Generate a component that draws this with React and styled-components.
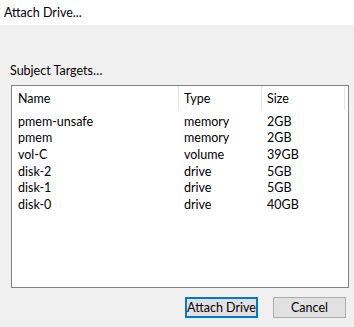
import React from 'react';
import styled, { createGlobalStyle } from 'styled-components';

const GlobalStyle = createGlobalStyle`
  html, body {
    margin: 0;
    padding: 0;
    background: #f0f0f0;
  }
  body {
    font-family: Lato, 'Noto Sans', sans-serif;
    font-size: 12.5px;
    color: #000;
  }
`;

const Dialog = styled.div`
  width: 354px;
  height: 327px;
  display: flex;
  flex-direction: column;
  background: #f0f0f0;
`;

const TitleBar = styled.div`
  height: 25px;
  background: #fff;
  display: flex;
  align-items: center;
  padding-left: 4px;
`;

const Body = styled.div`
  flex: 1;
  display: flex;
  flex-direction: column;
  padding: 38px 5px 0 11px;
`;

const Label = styled.div`
  height: 22px;
  margin-left: -1px;
  line-height: 16px;
`;

const ListBox = styled.div`
  height: 201px;
  border: 1px solid #828282;
  background: #fff;
  display: flex;
  flex-direction: column;
`;

const columns = '167px 83px 83px 1fr';

const HeaderRow = styled.div`
  display: grid;
  grid-template-columns: ${columns};
  height: 24px;
  margin-bottom: 3px;
`;

const HeaderCell = styled.div`
  display: flex;
  align-items: center;
  padding-left: ${(p) => (p.$first ? '6px' : '5px')};
  border-right: ${(p) => (p.$last ? 'none' : '1px solid #e5e5e5')};
`;

const Row = styled.div`
  display: grid;
  grid-template-columns: ${columns};
  height: 16.67px;
  align-items: center;
`;

const Cell = styled.div`
  padding-left: ${(p) => (p.$first ? '6px' : '5px')};
  white-space: nowrap;
`;

const ButtonRow = styled.div`
  display: flex;
  justify-content: flex-end;
  gap: 15px;
  padding: 9px 3px 0 0;
`;

const Button = styled.button`
  width: 73px;
  height: 21px;
  box-sizing: border-box;
  background: #e1e1e1;
  border: ${(p) => (p.$default ? '2px solid #0078d7' : '1px solid #adadad')};
  font-family: inherit;
  font-size: 12.5px;
  color: #000;
  padding: 0;
  white-space: nowrap;
  display: flex;
  align-items: center;
  justify-content: center;
`;

const targets = [
  { name: 'pmem-unsafe', type: 'memory', size: '2GB' },
  { name: 'pmem', type: 'memory', size: '2GB' },
  { name: 'vol-C', type: 'volume', size: '39GB' },
  { name: 'disk-2', type: 'drive', size: '5GB' },
  { name: 'disk-1', type: 'drive', size: '5GB' },
  { name: 'disk-0', type: 'drive', size: '40GB' },
];

export default function App() {
  return (
    <>
      <GlobalStyle />
      <Dialog>
        <TitleBar>Attach Drive...</TitleBar>
        <Body>
          <Label>Subject Targets…</Label>
          <ListBox>
            <HeaderRow>
              <HeaderCell $first>Name</HeaderCell>
              <HeaderCell>Type</HeaderCell>
              <HeaderCell>Size</HeaderCell>
              <HeaderCell $last />
            </HeaderRow>
            {targets.map((t) => (
              <Row key={t.name}>
                <Cell $first>{t.name}</Cell>
                <Cell>{t.type}</Cell>
                <Cell>{t.size}</Cell>
              </Row>
            ))}
          </ListBox>
          <ButtonRow>
            <Button $default>Attach Drive</Button>
            <Button>Cancel</Button>
          </ButtonRow>
        </Body>
      </Dialog>
    </>
  );
}
